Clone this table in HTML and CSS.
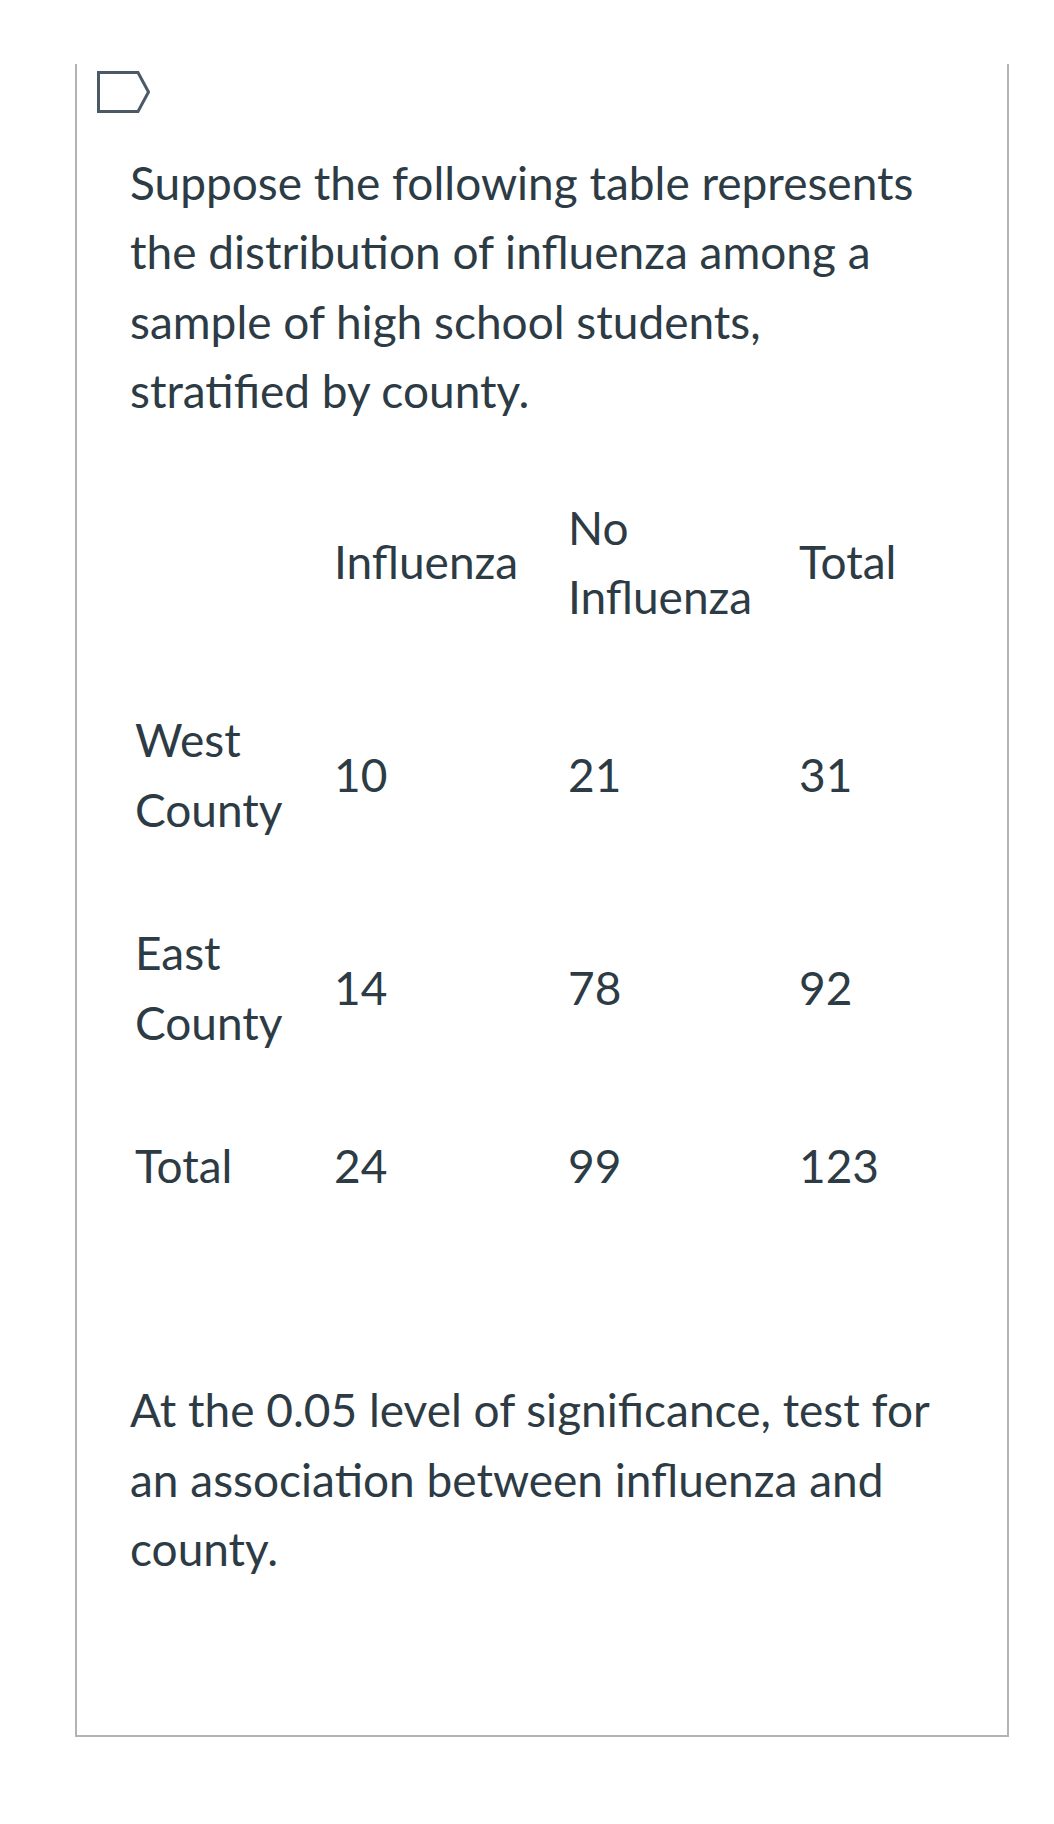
FILE: index.html
```html
<!DOCTYPE html>
<html lang="en">
<head>
<meta charset="utf-8">
<title>Question</title>
<link rel="stylesheet" href="styles.css">
</head>
<body>
<div class="question">
  <div class="q-header">
    <svg class="flag" width="54" height="42" viewBox="0 0 54 42" aria-hidden="true">
      <path d="M1.5 1.5 H41 L51.5 21 L41 40.5 H1.5 Z" fill="none" stroke="#4b5a66" stroke-width="3" stroke-linejoin="miter"/>
    </svg>
  </div>
  <div class="q-body">
    <p class="intro">Suppose the following table represents the distribution of influenza among a sample of high school students, stratified by county.</p>
    <table class="data">
      <tr>
        <td class="c1"></td>
        <td class="c2">Influenza</td>
        <td class="c3">No Influenza</td>
        <td class="c4">Total</td>
      </tr>
      <tr>
        <td class="c1">West County</td>
        <td class="c2">10</td>
        <td class="c3">21</td>
        <td class="c4">31</td>
      </tr>
      <tr>
        <td class="c1">East County</td>
        <td class="c2">14</td>
        <td class="c3">78</td>
        <td class="c4">92</td>
      </tr>
      <tr>
        <td class="c1">Total</td>
        <td class="c2">24</td>
        <td class="c3">99</td>
        <td class="c4">123</td>
      </tr>
    </table>
    <p class="task">At the 0.05 level of significance, test for an association between influenza and county.</p>
  </div>
</div>
</body>
</html>
```

FILE: styles.css
```css
html, body {
  margin: 0;
  padding: 0;
  background: #ffffff;
}

body {
  font-family: Lato, "Open Sans", sans-serif;
  color: #2d3b45;
}

.question {
  box-sizing: border-box;
  margin: 64px 0 0 75px;
  width: 934px;
  height: 1673px;
  border: 2px solid #b3b3b3;
  border-top: none;
}

.q-header {
  padding: 7px 0 0 20px;
  height: 41px;
}

.flag {
  display: block;
}

.q-body {
  padding: 0 65px 0 53px;
}

.intro,
.task {
  margin: 0;
  font-size: 46px;
  line-height: 69.4px;
}

.intro {
  margin-top: 36px;
}

.data {
  margin-top: 30px;
  border-collapse: collapse;
  font-size: 46px;
  line-height: 69.4px;
}

.data td {
  padding: 37px 0 37px 5px;
  vertical-align: middle;
  text-align: left;
}

.c1 { width: 194px; }
.c2 { width: 229px; }
.c3 { width: 226px; }
.c4 { width: 120px; }

.task {
  margin-top: 138px;
}
```
